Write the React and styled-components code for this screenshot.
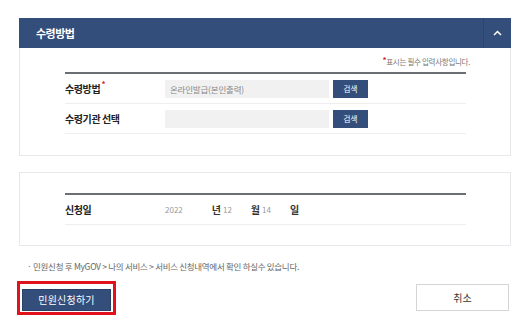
import React from 'react';
import styled, { createGlobalStyle } from 'styled-components';

const Global = createGlobalStyle`
  body {
    margin: 0;
    background: #ffffff;
    font-family: "Noto Sans CJK KR", "Noto Sans", sans-serif;
  }
`;

const Page = styled.div`
  width: 526px;
  height: 332px;
  padding: 18px 15px 0 19px;
  box-sizing: border-box;
  display: flex;
  flex-direction: column;
`;

const Panel = styled.section`
  border: 1px solid #e6e8ec;
  border-top: ${p => (p.$headed ? 'none' : '1px solid #e6e8ec')};
  margin-bottom: ${p => p.$mb || 0}px;
`;

const Header = styled.div`
  height: 30px;
  background: #344e7b;
  display: flex;
  align-items: center;
  justify-content: space-between;
  margin: 0 -1px;
`;

const Title = styled.h2`
  margin: 0 0 0 17px;
  font-size: 11px;
  font-weight: 700;
  color: #ffffff;
  letter-spacing: -0.5px;
`;

const Toggle = styled.div`
  width: 27px;
  height: 30px;
  border-left: 1px solid #2c4370;
  display: flex;
  align-items: center;
  justify-content: center;
`;

const Body = styled.div`
  padding: ${p => p.$pad};
  margin: 0 44px 0 45px;
`;

const Notice = styled.p`
  margin: 0 -4px 5px 0;
  text-align: right;
  font-size: 7.5px;
  line-height: 10px;
  color: #777;
  letter-spacing: -0.3px;
`;

const Star = styled.span`
  color: #d21c2c;
  font-weight: 700;
  font-size: 8px;
  vertical-align: top;
  line-height: 6px;
`;

const Table = styled.div`
  border-top: 2px solid #6b6f74;
`;

const Row = styled.div`
  height: 29px;
  display: grid;
  grid-template-columns: 100px 164px auto 1fr;
  align-items: center;
  border-bottom: 1px solid #eeeeee;
`;

const Label = styled.div`
  font-size: 10px;
  font-weight: 700;
  color: #222;
  letter-spacing: -0.4px;
`;

const Input = styled.div`
  height: 18px;
  background: #f1f1f1;
  font-size: 8.5px;
  color: #888;
  line-height: 18px;
  padding-left: 5px;
  letter-spacing: -0.2px;
`;

const SearchBtn = styled.button`
  margin-left: 4px;
  width: 35px;
  height: 18px;
  background: #344e7b;
  border: none;
  color: #fff;
  font-family: inherit;
  font-size: 7.5px;
  padding: 0;
`;

const DateCells = styled.div`
  display: flex;
  align-items: center;
  font-size: 8px;
  color: #999;
`;

const Unit = styled.span`
  font-size: 10px;
  font-weight: 700;
  color: #333;
  margin: ${p => p.$m};
`;

const Hint = styled.p`
  margin: 15px 0 0 8px;
  font-size: 8.5px;
  line-height: 11px;
  color: #666;
  letter-spacing: -0.3px;
`;

const Actions = styled.div`
  display: flex;
  justify-content: space-between;
  align-items: center;
  margin: 9px 0 0 -2px;
`;

const SubmitWrap = styled.div`
  border: 3px solid #e0121c;
  padding: 1px 2px;
  background: #fff;
`;

const Submit = styled.button`
  width: 89px;
  height: 22px;
  background: #344e7b;
  border: 1px solid #2a3f66;
  color: #fff;
  font-family: inherit;
  font-size: 10px;
  letter-spacing: 0.2px;
`;

const Cancel = styled.button`
  width: 93px;
  height: 27px;
  background: #fff;
  border: 1px solid #d5d5d5;
  color: #333;
  font-family: inherit;
  font-size: 10px;
  margin-right: 2px;
`;

export default function App() {
  return (
    <>
      <Global />
      <Page>
        <Panel $headed $mb={16}>
          <Header>
            <Title>수령방법</Title>
            <Toggle>
              <svg width="9" height="6" viewBox="0 0 9 6">
                <path d="M1 5 L4.5 1.5 L8 5" fill="none" stroke="#fff" strokeWidth="1.5" />
              </svg>
            </Toggle>
          </Header>
          <Body $pad="9px 0 21px">
            <Notice><Star>*</Star>표시는 필수 입력사항입니다.</Notice>
            <Table>
              <Row>
                <Label>수령방법<Star> *</Star></Label>
                <Input>온라인발급(본인출력)</Input>
                <SearchBtn>검색</SearchBtn>
              </Row>
              <Row>
                <Label>수령기관 선택</Label>
                <Input />
                <SearchBtn>검색</SearchBtn>
              </Row>
            </Table>
          </Body>
        </Panel>
        <Panel>
          <Body $pad="20px 0 20px">
            <Table>
              <Row>
                <Label>신청일</Label>
                <DateCells>
                  2022
                  <Unit $m="0 2px 0 29px">년</Unit>12
                  <Unit $m="0 2px 0 19px">월</Unit>14
                  <Unit $m="0 0 0 19px">일</Unit>
                </DateCells>
              </Row>
            </Table>
          </Body>
        </Panel>
        <Hint>· 민원신청 후 MyGOV &gt; 나의 서비스 &gt; 서비스 신청내역에서 확인 하실수 있습니다.</Hint>
        <Actions>
          <SubmitWrap>
            <Submit>민원신청하기</Submit>
          </SubmitWrap>
          <Cancel>취소</Cancel>
        </Actions>
      </Page>
    </>
  );
}
